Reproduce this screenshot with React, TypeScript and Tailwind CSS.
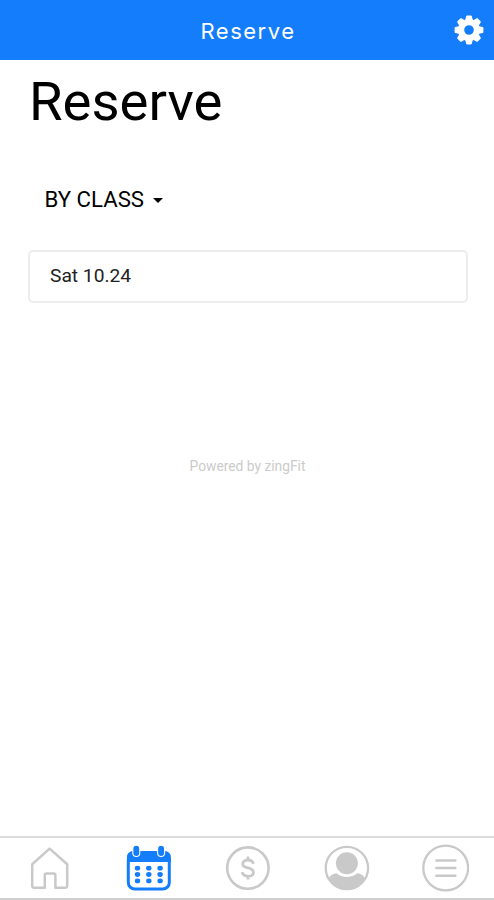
import type { ReactNode } from "react";

const GRAY = "#c9c9c9";
const BLUE = "#147dfb";

function Icon({ children }: { children: ReactNode }) {
  return (
    <svg width="48" height="48" viewBox="0 0 48 48" fill="none">
      {children}
    </svg>
  );
}

function HomeIcon() {
  return (
    <Icon>
      <path
        d="M24.6 4.6 L42.2 20.2 V41.6 Q42.2 43.8 40.2 43.8 H30.4 V31.2 Q30.4 29.6 28.8 29.6 H21.4 Q19.8 29.6 19.8 31.2 V43.8 H9 Q7.2 43.8 7.2 41.6 V20.2 Z"
        stroke={GRAY}
        strokeWidth="2.5"
        strokeLinejoin="round"
      />
    </Icon>
  );
}

function CalendarIcon() {
  return (
    <Icon>
      <rect x="4.3" y="8.5" width="41" height="36.5" rx="6.5" stroke={BLUE} strokeWidth="3" />
      <path d="M3 18 V13.5 Q3 7 9.5 7 H40.3 Q46.8 7 46.8 13.5 V18 Z" fill={BLUE} />
      {[12.3, 37.1].map((x) => (
        <rect key={x} x={x - 3.5} y="1.3" width="7" height="11.2" rx="3.5" fill={BLUE} stroke="#fff" strokeWidth="1.1" />
      ))}
      {[24.2, 30.5, 36.9].map((y) =>
        [13.5, 24.8, 36.1].map((x) => (
          <ellipse key={`${x}-${y}`} cx={x} cy={y} rx="2.7" ry="2.4" fill={BLUE} />
        )),
      )}
    </Icon>
  );
}

function DollarIcon() {
  return (
    <Icon>
      <circle cx="24.9" cy="24.1" r="20.7" stroke={GRAY} strokeWidth="2.6" />
      <path
        d="M30.4 19.8 C29.7 17.2 27.4 16 24.9 16 C21.9 16 19.7 17.5 19.7 19.9 C19.7 22.5 22.2 23.2 25 23.9 C28 24.6 30.4 25.5 30.4 28.3 C30.4 30.9 28 32.3 25 32.3 C22 32.3 19.8 30.9 19.1 28.2 M25 12.6 V16 M25 32.3 V35.6"
        stroke={GRAY}
        strokeWidth="2.8"
      />
    </Icon>
  );
}

function ProfileIcon() {
  return (
    <Icon>
      <circle cx="24.9" cy="24" r="21.2" stroke={GRAY} strokeWidth="2.3" />
      <circle cx="24.9" cy="19.3" r="11" fill={GRAY} />
      <path
        d="M6.6 34.5 C8.4 31.5 11 29.3 14.6 29.3 C17.5 31.8 21 33 24.9 33 C28.8 33 32.3 31.8 35.2 29.3 C38.8 29.3 41.4 31.5 43.2 34.5 C39.5 41.5 32.8 46 24.9 46 C17 46 10.3 41.5 6.6 34.5 Z"
        fill={GRAY}
      />
    </Icon>
  );
}

function MenuIcon() {
  return (
    <Icon>
      <circle cx="24.7" cy="24" r="22.4" stroke={GRAY} strokeWidth="2.3" />
      <path d="M14.4 16.4 H35.4 M14.4 24.1 H35.4 M14.4 31.8 H35.4" stroke={GRAY} strokeWidth="2.5" />
    </Icon>
  );
}

function GearIcon() {
  return (
    <svg width="30" height="30" viewBox="-15 -15 30 30">
      {[0, 45, 90, 135, 180, 225, 270, 315].map((angle) => (
        <path
          key={angle}
          d="M-4 -9 L-2.9 -13.6 Q-2.7 -14.4 -1.9 -14.4 H1.9 Q2.7 -14.4 2.9 -13.6 L4 -9 Z"
          fill="#fff"
          transform={`rotate(${angle})`}
        />
      ))}
      <circle r="7.9" fill="none" stroke="#fff" strokeWidth="6.2" />
    </svg>
  );
}

const tabs = [
  { label: "Home", icon: <HomeIcon /> },
  { label: "Reserve", icon: <CalendarIcon /> },
  { label: "Buy", icon: <DollarIcon /> },
  { label: "Profile", icon: <ProfileIcon /> },
  { label: "Menu", icon: <MenuIcon /> },
];

export default function App() {
  return (
    <div className="flex h-[900px] w-[494px] flex-col overflow-hidden bg-white font-['Roboto',sans-serif] text-black">
      <header className="grid h-[60px] shrink-0 grid-cols-[1fr_auto_1fr] items-center bg-[#147dfb] pr-[10px] pl-[12px]">
        <span />
        <span className="pt-[2px] font-['Inter',sans-serif] text-[22px] leading-7 tracking-[1.5px] text-white">
          Reserve
        </span>
        <button aria-label="Settings" className="justify-self-end">
          <GearIcon />
        </button>
      </header>

      <main className="flex flex-1 flex-col px-7">
        <h1 className="mt-[8px] ml-px text-[54.5px] leading-[66px]">Reserve</h1>
        <button className="mt-[51px] ml-[16.5px] flex items-center self-start text-[22.2px] leading-7">
          BY CLASS
          <span className="mt-[2px] ml-[9px] border-x-[5px] border-t-[5px] border-x-transparent border-t-black" />
        </button>
        <div className="mt-[37px] flex h-[53px] w-[440px] items-center rounded-[5px] border-2 border-[#ececec] pb-px pl-5 text-[19.2px] text-[#222]">
          Sat 10.24
        </div>
        <p className="mt-[153px] ml-px text-center text-[13.8px] leading-5 text-[#cbcbcb]">Powered by zingFit</p>
      </main>

      <nav className="grid h-16 shrink-0 grid-cols-5 border-t-2 border-b-2 border-t-[#dcdcdc] border-b-[#cfcfcf]">
        {tabs.map((tab) => (
          <button key={tab.label} aria-label={tab.label} className="flex items-center justify-center">
            {tab.icon}
          </button>
        ))}
      </nav>
    </div>
  );
}
